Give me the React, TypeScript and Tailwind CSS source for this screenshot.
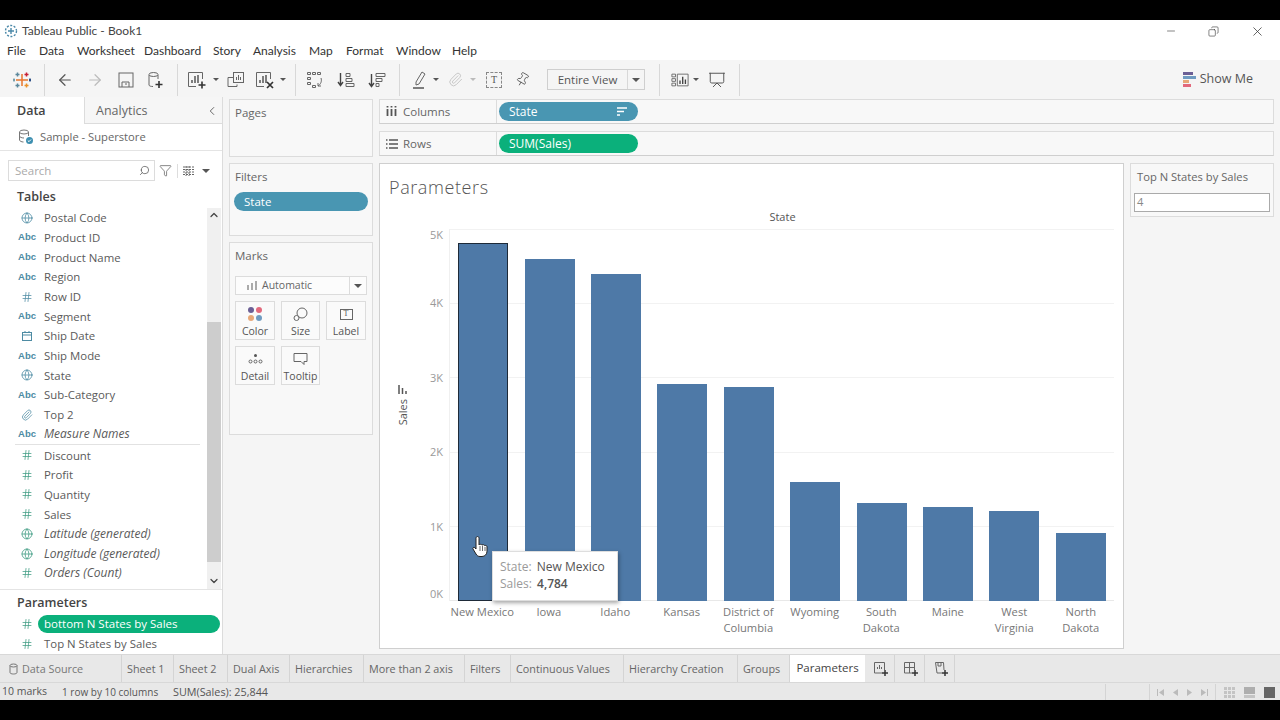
import { ArrowLeft, ArrowRight, ChevronLeft, ChevronDown, ChevronUp, Copy, Funnel, Globe, Hash, Minus, Paperclip, Pin, Presentation, Search, X } from "lucide-react";

const SANS = "font-['Open_Sans','Noto_Sans',sans-serif]";

const bars = [
  { name: ["New Mexico"], top: 243 },
  { name: ["Iowa"], top: 259 },
  { name: ["Idaho"], top: 274 },
  { name: ["Kansas"], top: 384 },
  { name: ["District of", "Columbia"], top: 387 },
  { name: ["Wyoming"], top: 482 },
  { name: ["South", "Dakota"], top: 503 },
  { name: ["Maine"], top: 507 },
  { name: ["West", "Virginia"], top: 511 },
  { name: ["North", "Dakota"], top: 533 },
];

type FieldKind = "abc" | "globe" | "hash" | "date" | "clip";

const dims: { label: string; kind: FieldKind; italic?: boolean }[] = [
  { label: "Postal Code", kind: "globe" },
  { label: "Product ID", kind: "abc" },
  { label: "Product Name", kind: "abc" },
  { label: "Region", kind: "abc" },
  { label: "Row ID", kind: "hash" },
  { label: "Segment", kind: "abc" },
  { label: "Ship Date", kind: "date" },
  { label: "Ship Mode", kind: "abc" },
  { label: "State", kind: "globe" },
  { label: "Sub-Category", kind: "abc" },
  { label: "Top 2", kind: "clip" },
  { label: "Measure Names", kind: "abc", italic: true },
];

const measures: { label: string; kind: FieldKind; italic?: boolean }[] = [
  { label: "Discount", kind: "hash" },
  { label: "Profit", kind: "hash" },
  { label: "Quantity", kind: "hash" },
  { label: "Sales", kind: "hash" },
  { label: "Latitude (generated)", kind: "globe", italic: true },
  { label: "Longitude (generated)", kind: "globe", italic: true },
  { label: "Orders (Count)", kind: "hash", italic: true },
];

const tabs = [
  { label: "Sheet 1", w: "w-[52px]" },
  { label: "Sheet 2", w: "w-[54px]" },
  { label: "Dual Axis", w: "w-[62px]" },
  { label: "Hierarchies", w: "w-[74px]" },
  { label: "More than 2 axis", w: "w-[101px]" },
  { label: "Filters", w: "w-[46px]" },
  { label: "Continuous Values", w: "w-[113px]" },
  { label: "Hierarchy Creation", w: "w-[114px]" },
  { label: "Groups", w: "w-[52px]" },
];

function Caret({ className = "" }: { className?: string }) {
  return <div className={`w-0 h-0 border-x-[3px] border-x-transparent border-t-[3px] border-t-[#555] ${className}`} />;
}

function FieldIcon({ kind, teal }: { kind: FieldKind; teal: boolean }) {
  const color = teal ? "text-[#3f9c83]" : "text-[#4d8ba3]";
  if (kind === "abc") return <span className="text-[9.5px] font-semibold text-[#4d8ba3] font-['Liberation_Sans',sans-serif]">Abc</span>;
  if (kind === "globe") return <Globe className={`w-[12px] h-[12px] ${color}`} strokeWidth={1.6} />;
  if (kind === "hash") return <Hash className={`w-[12px] h-[12px] ${color}`} strokeWidth={1.5} />;
  if (kind === "clip") return <Paperclip className={`w-[12px] h-[12px] ${color}`} strokeWidth={1.5} />;
  return (
    <svg width="12" height="12" viewBox="0 0 12 12" fill="none" stroke="#4d8ba3" strokeWidth="1">
      <rect x="1.5" y="2.5" width="9" height="8" />
      <path d="M1.5 5h9M4 1v2M8 1v2" />
    </svg>
  );
}

function FieldRow({ label, kind, italic, teal, h = "h-[19.7px]" }: { label: string; kind: FieldKind; italic?: boolean; teal?: boolean; h?: string }) {
  return (
    <div className={`flex items-center ${h} text-[#5a5a5a] ${italic ? "text-[12px]" : "text-[11.4px]"}`}>
      <div className="w-[44px] pl-[10px] flex justify-center shrink-0">
        <FieldIcon kind={kind} teal={!!teal} />
      </div>
      <span className={italic ? "italic" : ""}>{label}</span>
    </div>
  );
}

function Tableau({ size = 18 }: { size?: number }) {
  return (
    <svg width={size} height={size} viewBox="0 0 18 18" fill="none" strokeWidth="1.5">
      <path d="M9 3v12M3 9h12" stroke="#e8762d" />
      <path d="M4.5 1.5v4M2.5 3.5h4" stroke="#5b879b" />
      <path d="M13.5 1.5v4M11.5 3.5h4" stroke="#c72035" />
      <path d="M4.5 12.5v4M2.5 14.5h4" stroke="#59879b" />
      <path d="M13.5 12.5v4M11.5 14.5h4" stroke="#eb9129" />
      <path d="M1 7.5v3M0 9h2" stroke="#7099a6" />
      <path d="M17 7.5v3M16 9h2" stroke="#1f447e" />
    </svg>
  );
}

function ChartIcon({ badge }: { badge: "plus" | "x" }) {
  return (
    <svg width="20" height="20" viewBox="0 0 20 20" fill="none" stroke="#666" strokeWidth="1">
      <path d="M15.5 9V2.5h-14v14H9" />
      <path d="M5 13V10M8 13V6M11 13V5" strokeWidth="1.5" stroke="#555" />
      {badge === "plus" ? <path d="M15 11.5v7M11.5 15h7" strokeWidth="1.6" stroke="#333" /> : <path d="M12 12l6 6M18 12l-6 6" strokeWidth="1.7" stroke="#333" />}
    </svg>
  );
}

function Shelf({ label, icon, pill, color, sort }: { label: string; icon: React.ReactNode; pill: string; color: string; sort?: boolean }) {
  return (
    <div className="h-[25px] flex items-center bg-[#f8f8f8] border border-[#dcdcdc] border-b-[#cfcfcf] text-[11.5px] text-[#666]">
      <div className="w-[117px] h-full flex items-center border-r border-[#dcdcdc] shrink-0">
        <div className="w-[23px] flex justify-center">{icon}</div>
        <span>{label}</span>
      </div>
      <div className={`ml-[2px] w-[139px] h-[19px] rounded-full ${color} text-white text-[12px] font-medium flex items-center justify-between pl-[10px] pr-[10px]`}>
        <span>{pill}</span>
        {sort ? (
          <svg width="11" height="9" viewBox="0 0 11 9" fill="none" stroke="#fff" strokeWidth="1.6">
            <path d="M0 1h10M0 4.5h7M0 8h3" />
          </svg>
        ) : null}
      </div>
    </div>
  );
}

function MarkButton({ label, children }: { label: string; children: React.ReactNode }) {
  return (
    <div className="h-[39px] border border-[#dcdcdc] bg-[#fafafa] flex flex-col items-center justify-between pt-[3px] pb-[1px] text-[10.5px] text-[#555]">
      <div className="h-[18px] flex items-center">{children}</div>
      <span className="leading-[14px]">{label}</span>
    </div>
  );
}

function ToolbarSep() {
  return <div className="w-px h-[32px] bg-[#d8d8d8] shrink-0" />;
}

function Slot({ w, children }: { w: string; children?: React.ReactNode }) {
  return <div className={`${w} shrink-0 flex items-center justify-center`}>{children}</div>;
}

function Toolbar() {
  return (
    <div className="h-[37px] pt-[2px] bg-[#f5f5f5] flex items-center shrink-0">
      <Slot w="w-[44px]"><Tableau /></Slot>
      <ToolbarSep />
      <Slot w="w-[5px]" />
      <Slot w="w-[30px]"><ArrowLeft className="w-[18px] h-[18px] text-[#555]" strokeWidth={1.6} /></Slot>
      <Slot w="w-[30px]"><ArrowRight className="w-[18px] h-[18px] text-[#bbb]" strokeWidth={1.6} /></Slot>
      <Slot w="w-[31px]">
        <svg width="16" height="16" viewBox="0 0 16 16" fill="none" stroke="#666">
          <rect x="1" y="1" width="14" height="14" />
          <path d="M4 15v-5h7v5M7 12h2" />
        </svg>
      </Slot>
      <Slot w="w-[29px]">
        <svg width="18" height="18" viewBox="0 0 18 18" fill="none" stroke="#666">
          <path d="M2 4v10c0 1 2 1.500 4 1.500M11 4v4" />
          <ellipse cx="6.500" cy="3.500" rx="4.500" ry="2" />
          <path d="M12 10v7M8.500 13.500h7" stroke="#333" strokeWidth="1.6" />
        </svg>
      </Slot>
      <Slot w="w-[7px]" />
      <ToolbarSep />
      <Slot w="w-[37px]"><ChartIcon badge="plus" /></Slot>
      <Slot w="w-[2px]"><div className="shrink-0"><Caret /></div></Slot>
      <Slot w="w-[38px]">
        <svg width="18" height="18" viewBox="0 0 18 18" fill="none" stroke="#666">
          <path d="M6 6.500h-5v9h9v-2" />
          <rect x="6.500" y="1.500" width="10" height="10" />
          <path d="M9.500 9V6M11.500 9V4M13.500 9V6" />
        </svg>
      </Slot>
      <Slot w="w-[20px]"><ChartIcon badge="x" /></Slot>
      <Slot w="w-[16px]"><Caret /></Slot>
      <Slot w="w-[4px]" />
      <ToolbarSep />
      <Slot w="w-[38px]">
        <svg width="18" height="18" viewBox="0 0 18 18" fill="none" stroke="#666">
          <path d="M1.500 1.500h3v2h-3zM6.500 1.500h3v2h-3zM11.500 1.500h3v2h-3zM1.500 6.500h3v2h-3zM1.500 11.500h3v2h-3zM6.500 14.500h3v2h-3z" />
          <path d="M15 7c1 3 0 6-3 8M15 15h-3v-3" />
        </svg>
      </Slot>
      <Slot w="w-[24px]">
        <svg width="18" height="18" viewBox="0 0 18 18" fill="none" stroke="#666">
          <path d="M3.500 2v12M1 11l2.500 3.500L6 11" strokeWidth="1.400" stroke="#444" />
          <path d="M9 2.500h4v3H9zM9 7.500h6v3H9zM9 12.500h8v3H9z" />
        </svg>
      </Slot>
      <Slot w="w-[38px]">
        <svg width="18" height="18" viewBox="0 0 18 18" fill="none" stroke="#666">
          <path d="M3.500 3v12M1 12l2.500 3.500L6 12" strokeWidth="1.400" stroke="#444" />
          <path d="M8 2.500h9v3H8zM8 7.500h6v3H8zM8 12.500h3v3H8z" />
        </svg>
      </Slot>
      <Slot w="w-[3px]" />
      <ToolbarSep />
      <Slot w="w-[10px]" />
      <Slot w="w-[20px]">
        <svg width="16" height="20" viewBox="0 0 16 20" fill="none" stroke="#666">
          <path d="M4 12l6-10 3 2-6 10-3 1z" />
          <path d="M1 18h11" strokeWidth="1.500" stroke="#555" />
        </svg>
      </Slot>
      <Slot w="w-[12px]"><Caret /></Slot>
      <Slot w="w-[26px]"><Paperclip className="w-[15px] h-[15px] text-[#c4c4c4]" strokeWidth={1.5} /></Slot>
      <Slot w="w-[10px]"><Caret className="border-t-[#bbb]" /></Slot>
      <Slot w="w-[32px]">
        <div className="w-[16px] h-[16px] border border-dashed border-[#888] flex items-center justify-center text-[10px] text-[#555] font-['Liberation_Serif',serif]">T</div>
      </Slot>
      <Slot w="w-[24px]"><Pin className="w-[15px] h-[15px] text-[#555] rotate-[30deg]" strokeWidth={1.3} /></Slot>
      <Slot w="w-[13px]" />
      <div className="w-[98px] h-[21px] shrink-0 border border-[#cfcfcf] bg-[#f5f5f5] flex items-center text-[11.5px] text-[#555]">
        <div className="w-[80px] h-full border-r border-[#d8d8d8] flex items-center justify-center">Entire View</div>
        <div className="flex-1 flex justify-center"><Caret className="border-x-[4px] border-t-[4px]" /></div>
      </div>
      <Slot w="w-[14px]" />
      <ToolbarSep />
      <Slot w="w-[11px]" />
      <Slot w="w-[18px]">
        <svg width="18" height="14" viewBox="0 0 20 15" fill="none" stroke="#666">
          <path d="M1 1h4v3H1zM1 6h4v3H1zM1 11h4v3H1zM7 1h12v13H7z" />
          <path d="M10 12V8M13 12V4M16 12V7" strokeWidth="1.500" stroke="#444" />
        </svg>
      </Slot>
      <Slot w="w-[14px]"><Caret /></Slot>
      <Slot w="w-[28px]"><Presentation className="w-[18px] h-[18px] text-[#555]" strokeWidth={1.3} /></Slot>
      <Slot w="w-[8px]" />
      <ToolbarSep />
      <div className="flex-1" />
      <div className="flex items-center gap-[4px] pr-[27px] text-[12.5px] text-[#555]">
        <svg width="13" height="16" viewBox="0 0 13 16">
          <rect x="0" y="0" width="10" height="3" fill="#6b5f95" />
          <rect x="0" y="4" width="13" height="3" fill="#6f9bc1" />
          <rect x="0" y="8" width="6" height="3" fill="#e8a878" />
          <rect x="0" y="12" width="8" height="3" fill="#e2697c" />
        </svg>
        <span>Show Me</span>
      </div>
    </div>
  );
}

function Sidebar() {
  return (
    <div className="w-[223px] shrink-0 bg-white border-r border-[#dcdcdc] flex flex-col text-[#555]">
      <div className="h-[27px] flex shrink-0">
        <div className="w-[84px] pl-[17px] pt-[2px] flex items-center text-[12.5px] font-semibold text-[#444]">Data</div>
        <div className="flex-1 bg-[#f6f6f6] border-l border-b border-[#dcdcdc] flex items-center justify-between pl-[11px] pr-[3px] pt-[2px] text-[12.5px] text-[#666]">
          <span>Analytics</span>
          <ChevronLeft className="w-[14px] h-[14px] text-[#555]" strokeWidth={1.5} />
        </div>
      </div>
      <div className="h-[27px] flex items-center border-b border-[#e4e4e4] shrink-0 pl-[18px] gap-[6px] text-[11.2px] text-[#666]">
        <svg width="16" height="16" viewBox="0 0 16 16" fill="none" stroke="#777">
          <ellipse cx="6" cy="3" rx="4.500" ry="2" />
          <path d="M1.500 3v8c0 1 2 2 4 2M10.500 3v4M1.500 7c0 1 2 2 4.500 2" />
          <circle cx="11.500" cy="11.500" r="3.500" fill="#3d8fb0" stroke="none" />
          <path d="M9.800 11.500l1.200 1.200 2-2.200" stroke="#fff" />
        </svg>
        <span>Sample - Superstore</span>
      </div>
      <div className="h-[35px] pt-[9px] flex items-start shrink-0">
        <div className="ml-[8px] w-[147px] h-[21px] border border-[#dcdcdc] flex items-center justify-between pl-[6px] pr-[4px] text-[11.5px] text-[#aaa]">
          <span>Search</span>
          <Search className="w-[11px] h-[11px] text-[#555] -scale-x-100" strokeWidth={1.6} />
        </div>
        <div className="h-[21px] flex items-center">
          <Funnel className="ml-[4px] w-[13px] h-[13px] text-[#555]" strokeWidth={1.3} />
          <div className="ml-[5px] w-px h-[14px] bg-[#ddd]" />
          <svg width="12" height="10" viewBox="0 0 12 10" fill="none" stroke="#666" className="ml-[5px]">
            <path d="M0 1h12M0 3.500h12M0 6h12M0 8.500h12M3 0v10M6 0v10" strokeDasharray="2 1" />
          </svg>
          <Caret className="ml-[7px] border-x-[4px] border-t-[4px]" />
        </div>
      </div>
      <div className="h-[22px] pl-[17px] flex items-center text-[12.5px] font-semibold text-[#444] shrink-0">Tables</div>
      <div className="h-[382px] shrink-0 flex border-b border-[#e4e4e4]">
        <div className="flex-1">
          {dims.map((d) => (
            <FieldRow key={d.label} {...d} />
          ))}
          <div className="ml-[15px] w-[185px] h-px bg-[#e2e2e2]" />
          {measures.map((m) => (
            <FieldRow key={m.label} {...m} teal />
          ))}
        </div>
        <div className="w-[14px] mr-px bg-[#f0f0f0] flex flex-col items-center justify-between pb-[2px] pt-[1px]">
          <ChevronUp className="w-[12px] h-[12px] text-[#444]" strokeWidth={2.5} />
          <div className="w-full h-[240px] mt-[94px] mb-[6px] bg-[#cdcdcd]" />
          <ChevronDown className="w-[12px] h-[12px] text-[#444]" strokeWidth={2.5} />
        </div>
      </div>
      <div className="pl-[17px] pt-[3px] h-[23px] flex items-center text-[12.5px] font-semibold text-[#444] shrink-0">Parameters</div>
      <div className="h-[22px] flex items-center relative text-[11.5px] shrink-0">
        <div className="w-[38px] pl-[16px] flex justify-center">
          <Hash className="w-[12px] h-[12px] text-[#3f9c83]" strokeWidth={1.5} />
        </div>
        <div className="w-[182px] h-[18px] rounded-full bg-[#0bb07b] text-white font-medium flex items-center pl-[6px]">bottom N States by Sales</div>
      </div>
      <FieldRow label="Top N States by Sales" kind="hash" teal h="h-[17px]" />
    </div>
  );
}

function Card({ title, h, children }: { title: string; h: string; children?: React.ReactNode }) {
  return (
    <div className={`${h} border border-[#dcdcdc] bg-[#f8f8f8] px-[5px] text-[#666] text-[11.5px]`}>
      <div className="h-[26px] flex items-center">{title}</div>
      {children}
    </div>
  );
}

function Cards() {
  return (
    <div className="w-[144px] ml-[6px] mr-[6px] shrink-0 flex flex-col gap-[6px] pt-[2px]">
      <Card title="Pages" h="h-[58px]" />
      <Card title="Filters" h="h-[73px]">
        <div className="mt-[2px] -mx-[1px] h-[19px] rounded-full bg-[#4996b2] text-white font-medium flex items-center pl-[10px]">State</div>
      </Card>
      <Card title="Marks" h="h-[193px]">
        <div className="mt-[7px] h-[19px] border border-[#dcdcdc] bg-white/50 flex items-center text-[10.5px]">
          <div className="flex-1 flex items-center pl-[11px] gap-[5px] border-r border-[#dcdcdc] h-full">
            <svg width="10" height="9" viewBox="0 0 10 9" fill="#aaa">
              <rect x="0" y="4" width="2" height="5" />
              <rect x="4" y="2" width="2" height="7" />
              <rect x="8" y="0" width="2" height="9" />
            </svg>
            <span>Automatic</span>
          </div>
          <div className="w-[16px] flex justify-center"><Caret className="border-x-[4px] border-t-[4px]" /></div>
        </div>
        <div className="grid grid-cols-[40px_39px_40px] gap-x-[6px] gap-y-[6px] mt-[6px]">
          <MarkButton label="Color">
            <div className="grid grid-cols-2 gap-[2px]">
              <div className="w-[6px] h-[6px] rounded-full bg-[#6b5f95]" />
              <div className="w-[6px] h-[6px] rounded-full bg-[#e2697c]" />
              <div className="w-[6px] h-[6px] rounded-full bg-[#e8a878]" />
              <div className="w-[6px] h-[6px] rounded-full bg-[#6f9bc1]" />
            </div>
          </MarkButton>
          <MarkButton label="Size">
            <svg width="15" height="15" viewBox="0 0 15 15" fill="none" stroke="#666">
              <circle cx="9" cy="6" r="5" />
              <circle cx="3.500" cy="11" r="2.500" fill="#fafafa" />
            </svg>
          </MarkButton>
          <MarkButton label="Label">
            <div className="w-[13px] h-[11px] border border-[#666] flex items-center justify-center text-[8px] font-['Liberation_Serif',serif]">T</div>
          </MarkButton>
          <MarkButton label="Detail">
            <svg width="15" height="12" viewBox="0 0 15 12" fill="none" stroke="#666">
              <circle cx="7.500" cy="2.500" r="1.500" fill="#555" stroke="none" />
              <circle cx="2.500" cy="8.500" r="1.500" />
              <circle cx="7.500" cy="8.500" r="1.500" />
              <circle cx="12.500" cy="8.500" r="1.500" />
            </svg>
          </MarkButton>
          <MarkButton label="Tooltip">
            <svg width="15" height="14" viewBox="0 0 15 14" fill="none" stroke="#666">
              <path d="M1 1.500h13v8H11v3l-3-3H1z" />
            </svg>
          </MarkButton>
        </div>
      </Card>
    </div>
  );
}

function Chart() {
  return (
    <div className="flex-1 h-[486px] bg-white border border-[#cfcfcf] relative">
      <div className="h-[44px] pl-[9px] pt-[10px] text-[18px] leading-[26px] font-light tracking-[0.6px] text-[#555]">Parameters</div>
      <div className="h-[21px] pb-[2px] pl-[70px] w-[735px] flex justify-center items-center text-[11px] text-[#555] font-medium">State</div>
      <div className="flex h-[372px]">
        <div className="w-[46px] shrink-0 flex items-center justify-center">
          <div className="flex flex-col items-center gap-[4px] mb-[19px]">
            <svg width="11" height="10" viewBox="0 0 11 10" fill="none" stroke="#555" strokeWidth="1.5">
              <path d="M1 0v9M4.500 3v6M8 6v3" />
            </svg>
            <span className="[writing-mode:vertical-rl] rotate-180 text-[11px] leading-[14px] text-[#555]">Sales</span>
          </div>
        </div>
        <div className="w-[23px] pr-[6px] shrink-0 flex flex-col items-end text-[11px] leading-[14px] text-[#999]">
          <span className="mt-[-1px]">5K</span>
          <span className="mt-[54px]">4K</span>
          <span className="mt-[61px]">3K</span>
          <span className="mt-[60px]">2K</span>
          <span className="mt-[61px]">1K</span>
          <span className="mt-[53px]">0K</span>
        </div>
        <div className="w-[665px] border-l border-[#f0f0f0] relative grid grid-cols-10 items-end">
          <div className="absolute inset-0 flex flex-col justify-between">
            <div className="h-px bg-[#f2f2f2]" />
            <div className="h-px bg-[#f2f2f2]" />
            <div className="h-px bg-[#f2f2f2]" />
            <div className="h-px bg-[#f2f2f2]" />
            <div className="h-px bg-[#f2f2f2]" />
            <div className="h-px bg-[#e8e8e8]" />
          </div>
          {bars.map((b, i) => (
            <div key={b.name[0]} className="relative flex justify-center">
              <div
                className={`w-[50px] bg-[#4e79a7] ${i === 0 ? "border border-[#1e2a38]" : ""}`}
                style={{ height: 601 - b.top }}
              />
            </div>
          ))}
          <div className="absolute left-[42px] top-[322px] w-[126px] h-[50px] bg-white border border-[#dedede] shadow-[1px_2px_4px_rgba(0,0,0,0.35)] pl-[7px] pt-[6px] text-[12px] leading-[17px] text-[#9a9a9a] z-10 whitespace-nowrap">
            <div>State: <span className="font-medium text-[#555] ml-[2px]">New Mexico</span></div>
            <div>Sales: <span className="font-semibold text-[#555] ml-[2px]">4,784</span></div>
          </div>
          <svg width="17" height="23" viewBox="0 0 17 23" className="absolute left-[22px] top-[306px] z-20">
            <path
              d="M5.500 1.500c1 0 1.500.8 1.500 1.800V10c.2-.8 2.800-1 3 .2.400-.8 2.600-.7 2.800.5.700-.6 2.200-.2 2.200 1v4.500c0 3-2 5.300-5 5.300H8c-2 0-3-1-4-2.500L1 14c-.7-1 .7-2.300 1.800-1.300L4 14V3.300c0-1 .6-1.800 1.500-1.800z"
              fill="#fff"
              stroke="#222"
              strokeWidth="1"
            />
            <path d="M8 11v5M10.500 11v5M13 12v4" stroke="#444" strokeWidth=".8" />
          </svg>
        </div>
      </div>
      <div className="ml-[69px] w-[665px] grid grid-cols-10 pt-[3px] text-[11.2px] leading-[16px] text-[#777] text-center">
        {bars.map((b) => (
          <div key={b.name[0]}>
            {b.name.map((line) => (
              <div key={line}>{line}</div>
            ))}
          </div>
        ))}
      </div>
    </div>
  );
}

function Tabs() {
  return (
    <div className="h-[29px] bg-[#e8e8e8] flex shrink-0 border-t border-[#d8d8d8] border-b text-[10.8px] text-[#666]">
      <div className="w-[122px] pt-[1px] flex items-center pl-[9px] gap-[4px] border-r border-[#d4d4d4] text-[#777] shrink-0">
        <svg width="9" height="12" viewBox="0 0 9 12" fill="none" stroke="#777">
          <ellipse cx="4.500" cy="2.500" rx="3.500" ry="1.500" />
          <path d="M1 2.500v7c0 2 7 2 7 0v-7" />
        </svg>
        <span>Data Source</span>
      </div>
      {tabs.map((t) => (
        <div key={t.label} className={`${t.w} pt-[1px] pl-[5px] shrink-0 border-r border-[#d4d4d4] flex items-center whitespace-nowrap`}>
          {t.label}
        </div>
      ))}
      <div className="w-[75px] shrink-0 bg-white flex items-center justify-center text-[11.5px] font-medium text-[#444] pb-[2px]">Parameters</div>
      {[0, 1, 2].map((n) => (
        <div key={n} className="w-[30px] shrink-0 border-r border-[#d4d4d4] flex items-center justify-center pl-[2px]">
          <svg width="16" height="16" viewBox="0 0 16 16" fill="none" stroke="#666">
            {n === 0 ? <path d="M9 12H1.500V1.500h10V9M4.500 8V6M6.500 8V4M8.500 8V6" /> : null}
            {n === 1 ? <path d="M9 12H1.500V1.500h10V9M1.500 6.500h10M6.500 1.500V12" /> : null}
            {n === 2 ? <path d="M9 12H4L2.500 1.500h8L11 9M5 1.500V5h3V1.500" /> : null}
            <path d="M12 9v6M9 12h6" stroke="#333" strokeWidth="1.500" />
          </svg>
        </div>
      ))}
    </div>
  );
}

function StatusBar() {
  return (
    <div className="h-[17px] pt-[1px] bg-[#e8e8e8] flex items-center shrink-0 text-[10.5px] text-[#555]">
      <span className="w-[62px] pl-[2px]">10 marks</span>
      <span className="w-[111px] text-[10px]">1 row by 10 columns</span>
      <span className="text-[10.8px]">SUM(Sales): 25,844</span>
      <div className="flex-1" />
      <div className="w-px h-full bg-[#d4d4d4]" />
      <div className="w-[43px]" />
      <div className="w-px h-full bg-[#d4d4d4]" />
      <div className="w-[65px] flex items-center justify-between px-[7px] text-[#bbb]">
        <svg width="7" height="7" viewBox="0 0 7 7" fill="#bbb"><path d="M0 0h1v7H0zM7 0v7L2 3.500z" /></svg>
        <svg width="5" height="7" viewBox="0 0 5 7" fill="#bbb"><path d="M5 0v7L0 3.500z" /></svg>
        <svg width="5" height="7" viewBox="0 0 5 7" fill="#bbb"><path d="M0 0v7l5-3.500z" /></svg>
        <svg width="7" height="7" viewBox="0 0 7 7" fill="#bbb"><path d="M6 0h1v7H6zM0 0v7l5-3.500z" /></svg>
      </div>
      <div className="w-px h-full bg-[#d4d4d4]" />
      <div className="flex items-center gap-[9px] pl-[8px] pr-[5px]">
        <div className="w-[11px] h-[11px] grid grid-cols-3 gap-px">
          {[0, 1, 2, 3, 4, 5, 6, 7, 8].map((n) => (
            <div key={n} className="bg-[#c4c4c4]" />
          ))}
        </div>
        <div className="w-[11px] h-[11px] flex flex-col gap-px">
          <div className="h-[7px] bg-[#aeaeae]" />
          <div className="h-[3px] bg-[#c4c4c4]" />
        </div>
        <div className="w-[11px] h-[11px] bg-[#666]" />
      </div>
    </div>
  );
}

export default function App() {
  return (
    <div className={`w-[1280px] h-[720px] bg-black flex flex-col overflow-hidden ${SANS}`}>
      <div className="h-[20px] shrink-0" />
      <div className="h-[20px] pt-[2px] bg-white flex items-center shrink-0 text-[12px] text-[#444] font-['Lato',sans-serif]">
        <div className="w-[22px] flex justify-center">
          <svg width="14" height="14" viewBox="0 0 14 14" fill="none" stroke="#4a88a8" strokeWidth="1.400">
            <circle cx="7" cy="7" r="5.500" strokeDasharray="2 1.500" />
            <path d="M7 4v6M4 7h6" />
          </svg>
        </div>
        <span>Tableau Public - Book1</span>
        <div className="flex-1" />
        <div className="flex items-center text-[#333] pr-[1px]">
          <Slot w="w-[42px]"><Minus className="w-[12px] h-[12px]" strokeWidth={1.2} /></Slot>
          <Slot w="w-[43px]"><Copy className="w-[11px] h-[11px] -scale-x-100" strokeWidth={1.3} /></Slot>
          <Slot w="w-[44px]"><X className="w-[15px] h-[15px]" strokeWidth={1.2} /></Slot>
        </div>
      </div>
      <div className="h-[20px] pt-[2px] bg-white flex items-center shrink-0 text-[12px] text-[#333] font-['Lato',sans-serif]">
        <span className="ml-[7px] w-[32px]">File</span>
        <span className="w-[38px]">Data</span>
        <span className="w-[67px]">Worksheet</span>
        <span className="w-[69px]">Dashboard</span>
        <span className="w-[40px]">Story</span>
        <span className="w-[56px]">Analysis</span>
        <span className="w-[37px]">Map</span>
        <span className="w-[50px]">Format</span>
        <span className="w-[56px]">Window</span>
        <span>Help</span>
      </div>
      <Toolbar />
      <div className="h-[557px] shrink-0 flex bg-[#f5f5f5]">
        <Sidebar />
        <Cards />
        <div className="flex-1 flex flex-col pr-[6px] pt-[2px] gap-[7px]">
          <Shelf
            label="Columns"
            pill="State"
            color="bg-[#4996b2]"
            sort
            icon={
              <svg width="11" height="11" viewBox="0 0 11 11" fill="none" stroke="#555" strokeWidth="1.800">
                <path d="M1.500 3v7M5.500 3v7M9.500 3v7M1.500 0v1.500M5.500 0v1.500M9.500 0v1.500" />
              </svg>
            }
          />
          <Shelf
            label="Rows"
            pill="SUM(Sales)"
            color="bg-[#0bb07b]"
            icon={
              <svg width="12" height="10" viewBox="0 0 12 10" fill="none" stroke="#555" strokeWidth="1.600">
                <path d="M3 1h9M3 5h9M3 9h9M0 1h1.500M0 5h1.500M0 9h1.500" />
              </svg>
            }
          />
          <div className="flex gap-[6px]">
            <Chart />
            <div className="w-[144px] h-[54px] shrink-0 border border-[#dcdcdc] bg-[#f8f8f8] px-[3px] text-[11.2px] text-[#666]">
              <div className="h-[26px] pl-[3px] flex items-center whitespace-nowrap">Top N States by Sales</div>
              <div className="mt-[3px] h-[19px] border border-[#aaa] bg-white pl-[2px] flex items-center text-[#888]">4</div>
            </div>
          </div>
        </div>
      </div>
      <Tabs />
      <StatusBar />
      <div className="flex-1" />
    </div>
  );
}
